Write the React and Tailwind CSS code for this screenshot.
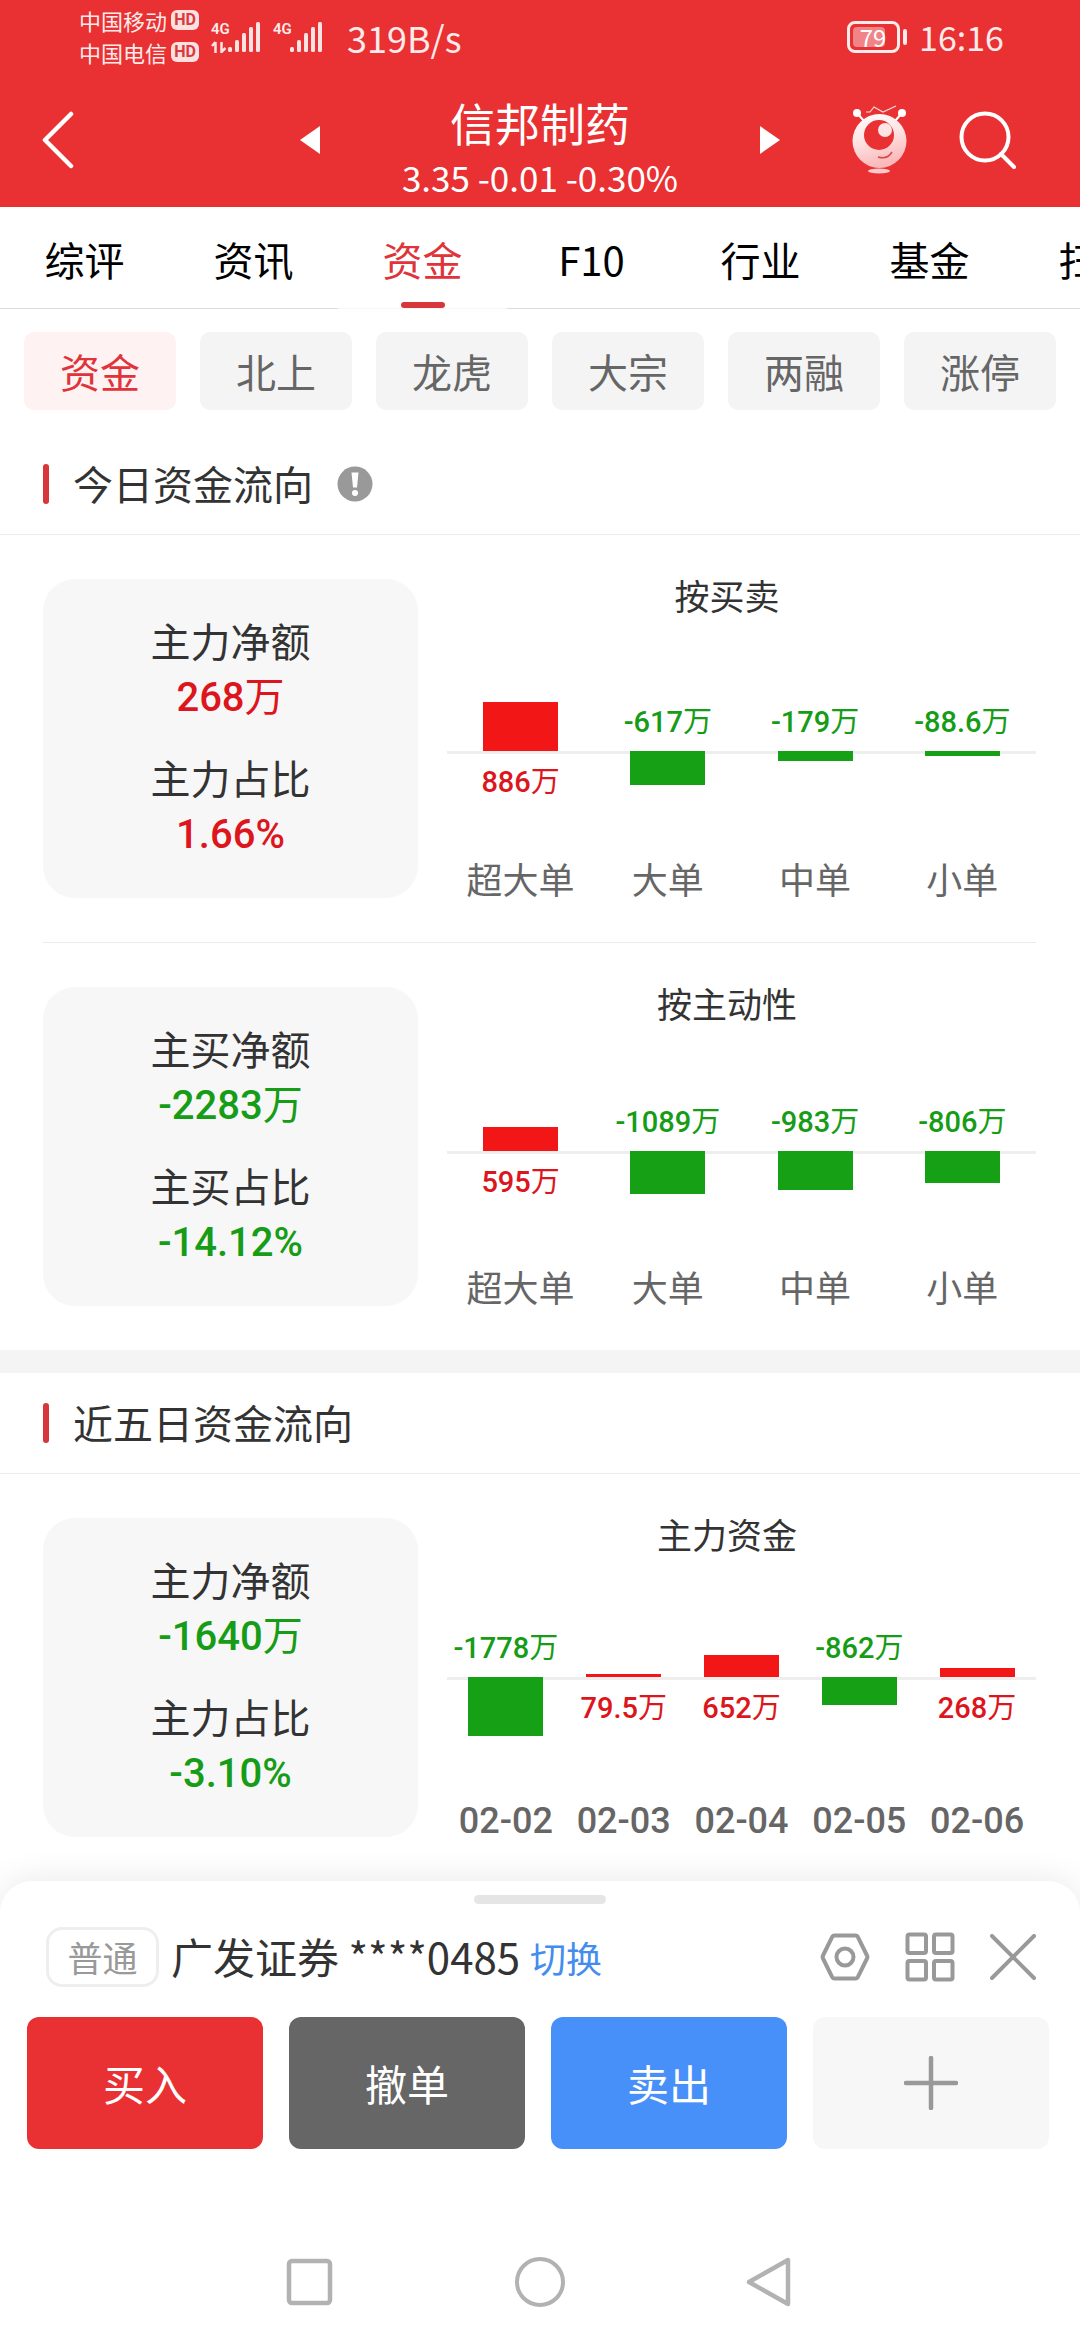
const signalBars = [5, 12, 19, 25, 30];

function Signal({ arrows }) {
  return (
    <div className="relative pl-4">
      <span className="absolute top-0 left-0 font-['Roboto',sans-serif] text-[15px] leading-4 font-semibold">4G</span>
      {arrows && (
        <svg className="absolute bottom-0 left-0" width="16" height="12" viewBox="0 0 16 12" fill="none" stroke="#fbe3e3" strokeWidth="2.500" aria-hidden="true">
          <path d="M4.500 1v11M1 5L4.500 1M10.500 1v10L14.500 7" />
        </svg>
      )}
      <svg width="34" height="32" viewBox="0 0 34 32" fill="#fbe3e3" aria-hidden="true">
        {signalBars.map((h, i) => (
          <rect key={h} x={1 + i * 7} y={31 - h} width="4" height={h} rx="1.500" />
        ))}
      </svg>
    </div>
  );
}

function HdBadge() {
  return (
    <span className="flex h-5 w-7 items-center justify-center rounded-md bg-[#fde0e0] font-['Roboto',sans-serif] text-base leading-5 font-bold text-[#d93a3c]">
      HD
    </span>
  );
}

function StatusBar() {
  return (
    <div className="flex h-[73px] items-center justify-between pr-[76px] pl-[79px] text-[#fdeaea]">
      <div className="flex items-center">
        <div className="pb-0.5 text-[22px] leading-8">
          <div className="flex items-center gap-1">
            中国移动 <HdBadge />
          </div>
          <div className="flex items-center gap-1">
            中国电信 <HdBadge />
          </div>
        </div>
        <div className="ml-3 flex gap-3">
          <Signal arrows />
          <Signal />
        </div>
        <span className="ml-6 text-4xl leading-10">319B/s</span>
      </div>
      <div className="flex items-center gap-3">
        <div className="flex items-center gap-[3px]">
          <div className="flex h-8 w-[53px] items-center rounded-lg border-[3px] border-[#fdeaea] p-[3px]">
            <span className="flex h-5 w-8 items-center justify-center rounded-sm bg-[#f08487] pl-2 text-2xl leading-5 text-white">
              79
            </span>
          </div>
          <span className="h-4 w-1 rounded-sm bg-[#fdeaea]" />
        </div>
        <span className="text-[34px] leading-10">16:16</span>
      </div>
    </div>
  );
}

function RobotIcon() {
  return (
    <svg width="56" height="70" viewBox="0 0 56 70" aria-hidden="true">
      <defs>
        <linearGradient id="robotBody" x1="0" y1="0" x2="0.300" y2="1">
          <stop offset="0" stopColor="#fff" />
          <stop offset="0.500" stopColor="#fde4e4" />
          <stop offset="1" stopColor="#fbb9bb" />
        </linearGradient>
      </defs>
      <path d="M14 7l4 0 4-5 9 5 13-6" stroke="#fcd9da" strokeWidth="1.200" fill="none" />
      <path d="M5 8l7 8M50 8l-7 8" stroke="#fff" strokeWidth="2" />
      <circle cx="5" cy="8" r="4" fill="#fff" />
      <circle cx="50" cy="8" r="4" fill="#fff" />
      <circle cx="27.500" cy="36" r="27" fill="url(#robotBody)" />
      <circle cx="27" cy="30" r="15" fill="#e93032" />
      <circle cx="33" cy="25" r="7" fill="#fde4e4" />
      <path d="M26 52c6 2 11 0 14-5" stroke="#d9474a" strokeWidth="1.500" fill="none" />
      <ellipse cx="27" cy="66" rx="11" ry="2.500" fill="#fbc9ca" />
    </svg>
  );
}

function Header() {
  return (
    <header className="bg-[#e93032] text-white">
      <StatusBar />
      <div className="grid h-[134px] grid-cols-[1fr_auto_1fr] items-center px-[41px]">
        <button aria-label="返回" className="justify-self-start">
          <svg width="34" height="58" viewBox="0 0 34 58" fill="none" stroke="#fff" strokeWidth="4.500" strokeLinecap="round" strokeLinejoin="round">
            <path d="M30 3L4 29l26 26" />
          </svg>
        </button>
        <div className="flex items-center gap-20">
          <button aria-label="上一只">
            <svg width="20" height="28" viewBox="0 0 20 28" fill="#fff">
              <path d="M20 0v28L0 14z" />
            </svg>
          </button>
          <div className="w-[280px] pt-[18px] text-center whitespace-nowrap">
            <h1 className="text-[45px] leading-[56px]">信邦制药</h1>
            <p className="text-[35px] leading-[52px]">3.35 -0.01 -0.30%</p>
          </div>
          <button aria-label="下一只">
            <svg width="20" height="28" viewBox="0 0 20 28" fill="#fff">
              <path d="M0 0v28L20 14z" />
            </svg>
          </button>
        </div>
        <div className="flex items-center gap-[51px] justify-self-end pr-[22px]">
          <button aria-label="智能助手">
            <RobotIcon />
          </button>
          <button aria-label="搜索">
            <svg width="58" height="58" viewBox="0 0 58 58" fill="none" stroke="#fff" strokeWidth="4" strokeLinecap="round">
              <circle cx="26" cy="26" r="23.500" />
              <path d="M42 43l13 13" />
            </svg>
          </button>
        </div>
      </div>
    </header>
  );
}

const tabs = ["综评", "资讯", "资金", "F10", "行业", "基金", "扫雷"];

function Tabs() {
  return (
    <nav className="flex h-[102px] overflow-hidden">
      {tabs.map((t) => {
        const active = t === "资金";
        return (
          <button
            key={t}
            className={
              "flex w-[169px] shrink-0 flex-col items-center justify-end border-b text-[40px] leading-[60px] " +
              (active ? "border-[#f6f6f6] text-[#e0343a]" : "border-[#dcdcdc] text-black")
            }
          >
            <span className="mb-[13px]">{t}</span>
            <span className={"h-1.5 w-11 rounded-full " + (active ? "bg-[#d7363a]" : "")} />
          </button>
        );
      })}
    </nav>
  );
}

const pills = ["资金", "北上", "龙虎", "大宗", "两融", "涨停"];

function Pills() {
  return (
    <div className="grid grid-cols-6 gap-6 px-6 pt-[23px] pb-6">
      {pills.map((p) => (
        <button
          key={p}
          className={
            "h-[78px] rounded-[10px] text-[40px] leading-[60px] " +
            (p === "资金" ? "bg-[#fff2f2] text-[#e0343a]" : "bg-[#f4f4f4] text-[#666]")
          }
        >
          {p}
        </button>
      ))}
    </div>
  );
}

function SectionTitle({ title, info }) {
  return (
    <div className="flex h-[101px] items-center border-b border-[#ebebeb] pl-[43px]">
      <span className="h-10 w-1.5 rounded-full bg-[#d7363a]" />
      <h2 className="ml-6 pb-0.5 text-[40px] leading-[60px] text-[#333]">{title}</h2>
      {info && (
        <button aria-label="说明" className="ml-6">
          <svg width="36" height="36" viewBox="0 0 36 36">
            <circle cx="18" cy="18" r="17.500" fill="#999" />
            <path d="M14.500 6.500h7l-1.500 15h-4z" fill="#fff" />
            <circle cx="18" cy="27" r="3" fill="#fff" />
          </svg>
        </button>
      )}
    </div>
  );
}

const toneText = (v) => (v.startsWith("-") ? "text-[#169c16]" : "text-[#dc161c]");

function Figures({ children }) {
  return <span className="font-['Roboto',sans-serif] leading-none font-medium">{children}</span>;
}

function Amount({ value }) {
  const unit = value.endsWith("万");
  return (
    <>
      <Figures>{unit ? value.slice(0, -1) : value}</Figures>
      {unit && "万"}
    </>
  );
}

function SummaryCard({ items }) {
  return (
    <dl className="flex w-[375px] shrink-0 flex-col gap-[29px] rounded-[32px] bg-[#f7f7f7] pt-[34px] pb-10 text-center text-[40px] leading-[54px]">
      {items.map(([label, value]) => (
        <div key={label}>
          <dt className="text-[#333]">{label}</dt>
          <dd className={toneText(value)}>
            <Amount value={value} />
          </dd>
        </div>
      ))}
    </dl>
  );
}

function FlowChart({ title, zero, scale, data }) {
  return (
    <figure className="flex min-w-0 flex-1 flex-col">
      <figcaption className="text-center text-[35px] leading-8 text-[#333]">{title}</figcaption>
      <div className="ml-[29px] h-[247px] text-[29px] leading-9 whitespace-nowrap">
        <div className="flex items-end border-b-[3px] border-[#eee]" style={{ height: zero + 3 }}>
          {data.map(([name, value]) => {
            const n = parseFloat(value);
            return (
              <div key={name} className="flex flex-1 justify-center">
                {n > 0 ? (
                  <span className="w-[75px] bg-[#f21616]" style={{ height: Math.round(n * scale) }} />
                ) : (
                  <span className="mb-3.5 text-[#169c16]">
                    <Amount value={value} />
                  </span>
                )}
              </div>
            );
          })}
        </div>
        <div className="relative -mt-[3px] flex items-start">
          {data.map(([name, value]) => {
            const n = parseFloat(value);
            return (
              <div key={name} className="flex flex-1 justify-center">
                {n > 0 ? (
                  <span className="mt-2.5 text-[#dc161c]">
                    <Amount value={value} />
                  </span>
                ) : (
                  <span className="w-[75px] bg-[#16a016]" style={{ height: Math.round(-n * scale) }} />
                )}
              </div>
            );
          })}
        </div>
      </div>
      <div className="ml-[29px] flex h-10 text-4xl leading-10 text-[#666]">
        {data.map(([name]) => (
          <span key={name} className="flex-1 text-center">
            {name.startsWith("0") ? <Figures>{name}</Figures> : name}
          </span>
        ))}
      </div>
    </figure>
  );
}

function FlowRow({ items, chart, divider }) {
  return (
    <div className="pr-11 pl-[43px]">
      <div className={"flex py-11 " + (divider ? "border-b border-[#ebebeb]" : "")}>
        <SummaryCard items={items} />
        <FlowChart {...chart} />
      </div>
    </div>
  );
}

const bySide = {
  title: "按买卖",
  zero: 140,
  scale: 0.055,
  data: [["超大单", "886万"], ["大单", "-617万"], ["中单", "-179万"], ["小单", "-88.6万"]],
};
const byInitiative = {
  title: "按主动性",
  zero: 132,
  scale: 0.0395,
  data: [["超大单", "595万"], ["大单", "-1089万"], ["中单", "-983万"], ["小单", "-806万"]],
};
const fiveDays = {
  title: "主力资金",
  zero: 127,
  scale: 0.033,
  data: [["02-02", "-1778万"], ["02-03", "79.5万"], ["02-04", "652万"], ["02-05", "-862万"], ["02-06", "268万"]],
};

function TradeSheet() {
  return (
    <section className="relative rounded-t-[32px] bg-white pt-3.5 shadow-[0_-4px_32px_rgba(0,0,0,0.08)]">
      <div className="mx-auto h-[9px] w-[132px] rounded-full bg-[#e5e5e5]" />
      <div className="mt-[23px] flex h-[60px] items-center pr-11 pl-[46px]">
        <span className="flex h-[60px] w-[113px] items-center justify-center rounded-2xl border-[3px] border-[#eee] text-[35px] leading-10 text-[#999]">
          普通
        </span>
        <span className="ml-3 pb-0.5 text-[42px] leading-[60px] whitespace-nowrap text-[#333]">广发证券 ****0485</span>
        <a href="#switch" className="ml-2.5 text-4xl leading-[60px] text-[#448cee]">
          切换
        </a>
        <div className="ml-auto flex items-center gap-[35px]">
          <button aria-label="设置">
            <svg width="50" height="50" viewBox="0 0 50 50" fill="none" stroke="#999" strokeWidth="4" strokeLinejoin="round">
              <path d="M14.500 3.500h21q1.500 0 2.300 1.300L47 23.500q.8 1.500 0 3L37.800 45.200q-.8 1.300-2.300 1.300h-21q-1.500 0-2.300-1.300L3 26.500q-.8-1.500 0-3L12.200 4.800q.8-1.300 2.300-1.300z" />
              <circle cx="25" cy="25" r="8.500" />
            </svg>
          </button>
          <button aria-label="更多功能">
            <svg width="50" height="50" viewBox="0 0 50 50" fill="none" stroke="#999" strokeWidth="4">
              <rect x="2.500" y="2.500" width="18.500" height="18.500" rx="2" />
              <rect x="29" y="2.500" width="18.500" height="18.500" rx="2" />
              <rect x="2.500" y="29" width="18.500" height="18.500" rx="2" />
              <rect x="29" y="29" width="18.500" height="18.500" rx="2" />
            </svg>
          </button>
          <button aria-label="关闭">
            <svg width="46" height="46" viewBox="0 0 46 46" stroke="#999" strokeWidth="4" strokeLinecap="round">
              <path d="M2 2l42 42M44 2L2 44" />
            </svg>
          </button>
        </div>
      </div>
      <div className="mt-[30px] grid grid-cols-4 gap-[26px] pr-[31px] pl-[27px] text-[42px] leading-[60px] text-white">
        <button className="h-[132px] rounded-xl bg-[#e93032]">买入</button>
        <button className="h-[132px] rounded-xl bg-[#666]">撤单</button>
        <button className="h-[132px] rounded-xl bg-[#4890f9]">卖出</button>
        <button aria-label="添加" className="flex h-[132px] items-center justify-center rounded-xl bg-[#f7f7f7]">
          <svg width="54" height="54" viewBox="0 0 54 54" stroke="#999" strokeWidth="4.500" strokeLinecap="round">
            <path d="M27 2v50M2 27h50" />
          </svg>
        </button>
      </div>
      <nav className="flex justify-center gap-[180px] pt-[108px] pb-[33px]">
        <button aria-label="最近任务">
          <svg width="50" height="50" viewBox="0 0 50 50" fill="none" stroke="#b2b2b2" strokeWidth="4.500">
            <rect x="4" y="4" width="41" height="42" rx="3" />
          </svg>
        </button>
        <button aria-label="主屏幕">
          <svg width="50" height="50" viewBox="0 0 50 50" fill="none" stroke="#b2b2b2" strokeWidth="4">
            <circle cx="25" cy="25" r="23" />
          </svg>
        </button>
        <button aria-label="系统返回">
          <svg width="50" height="50" viewBox="0 0 50 50" fill="none" stroke="#b2b2b2" strokeWidth="4.500" strokeLinejoin="round">
            <path d="M43 3v44L4 25z" />
          </svg>
        </button>
      </nav>
    </section>
  );
}

export default function App() {
  return (
    <div className="flex min-h-screen flex-col bg-white font-['Noto_Sans_CJK_SC',sans-serif]">
      <Header />
      <Tabs />
      <main className="flex-1">
        <Pills />
        <SectionTitle title="今日资金流向" info />
        <FlowRow items={[["主力净额", "268万"], ["主力占比", "1.66%"]]} chart={bySide} divider />
        <FlowRow items={[["主买净额", "-2283万"], ["主买占比", "-14.12%"]]} chart={byInitiative} />
        <div className="h-[23px] bg-[#f4f4f4]" />
        <SectionTitle title="近五日资金流向" />
        <FlowRow items={[["主力净额", "-1640万"], ["主力占比", "-3.10%"]]} chart={fiveDays} />
      </main>
      <TradeSheet />
    </div>
  );
}
